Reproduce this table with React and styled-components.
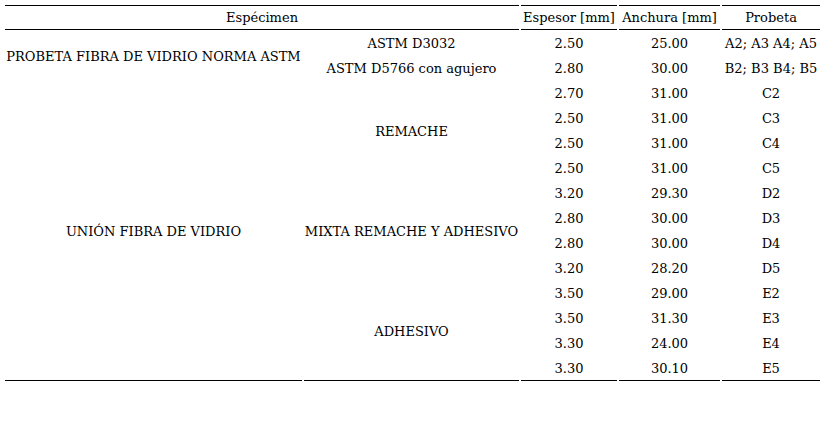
import React from 'react';
import styled, { createGlobalStyle } from 'styled-components';

const rows = [
	{ group: 'PROBETA FIBRA DE VIDRIO NORMA ASTM', groupSpan: 2, type: 'ASTM D3032', typeSpan: 1, thick: '2.50', width: '25.00', id: 'A2; A3 A4; A5' },
	{ type: 'ASTM D5766 con agujero', typeSpan: 1, thick: '2.80', width: '30.00', id: 'B2; B3 B4; B5' },
	{ group: 'UNIÓN FIBRA DE VIDRIO', groupSpan: 12, type: 'REMACHE', typeSpan: 4, thick: '2.70', width: '31.00', id: 'C2' },
	{ thick: '2.50', width: '31.00', id: 'C3' },
	{ thick: '2.50', width: '31.00', id: 'C4' },
	{ thick: '2.50', width: '31.00', id: 'C5' },
	{ type: 'MIXTA REMACHE Y ADHESIVO', typeSpan: 4, thick: '3.20', width: '29.30', id: 'D2' },
	{ thick: '2.80', width: '30.00', id: 'D3' },
	{ thick: '2.80', width: '30.00', id: 'D4' },
	{ thick: '3.20', width: '28.20', id: 'D5' },
	{ type: 'ADHESIVO', typeSpan: 4, thick: '3.50', width: '29.00', id: 'E2' },
	{ thick: '3.50', width: '31.30', id: 'E3' },
	{ thick: '3.30', width: '24.00', id: 'E4' },
	{ thick: '3.30', width: '30.10', id: 'E5' },
];

/************************************* jsx *************************************/

const App = () => {
	const lastRow = rows.length - 1;

	return (
		<>
			<GlobalStyle />
			<Page>
				<Table>
					<colgroup>
						<col style={{ width: 297 }} />
						<col style={{ width: 215 }} />
						<col style={{ width: 96 }} />
						<col style={{ width: 101 }} />
						<col style={{ width: 98 }} />
					</colgroup>
					<thead>
						<tr>
							<HeadCell colSpan={2}>Espécimen</HeadCell>
							<HeadCell>Espesor [mm]</HeadCell>
							<HeadCell>Anchura [mm]</HeadCell>
							<HeadCell>Probeta</HeadCell>
						</tr>
					</thead>
					<tbody>
						{rows.map((row, i) => {
							const isLast = i === lastRow;
							return (
								<tr key={row.id}>
									{row.group && (
										<Cell rowSpan={row.groupSpan} $closing={i + row.groupSpan - 1 === lastRow}>
											{row.group}
										</Cell>
									)}
									{row.type && (
										<Cell rowSpan={row.typeSpan} $closing={i + row.typeSpan - 1 === lastRow}>
											{row.type}
										</Cell>
									)}
									<Cell $closing={isLast}>{row.thick}</Cell>
									<Cell $closing={isLast}>{row.width}</Cell>
									<Cell $closing={isLast}>{row.id}</Cell>
								</tr>
							);
						})}
					</tbody>
				</Table>
			</Page>
		</>
	);
};

export default App;

/******************************** styled-components ********************************/

const GlobalStyle = createGlobalStyle`
	html, body {
		margin: 0;
		background: #ffffff;
	}
`;

const Page = styled.div`
	width: 830px;
	height: 437px;
	padding: 5px 0 0 3px;
	box-sizing: border-box;
	font-family: 'DejaVu Serif', 'Liberation Serif', serif;
	font-size: 13px;
	color: #000000;
`;

const Table = styled.table`
	table-layout: fixed;
	width: 819px;
	border-collapse: separate;
	border-spacing: 2px 0;
`;

const HeadCell = styled.th`
	height: 23px;
	padding: 0;
	font-weight: normal;
	text-align: center;
	vertical-align: middle;
	border-top: 1px solid #000000;
	border-bottom: 1px solid #000000;
	white-space: nowrap;
`;

const Cell = styled.td`
	height: 23px;
	padding: 2px 0 0;
	text-align: center;
	vertical-align: middle;
	white-space: nowrap;
	border-bottom: ${(props) => (props.$closing ? '1px solid #000000' : 'none')};
`;
